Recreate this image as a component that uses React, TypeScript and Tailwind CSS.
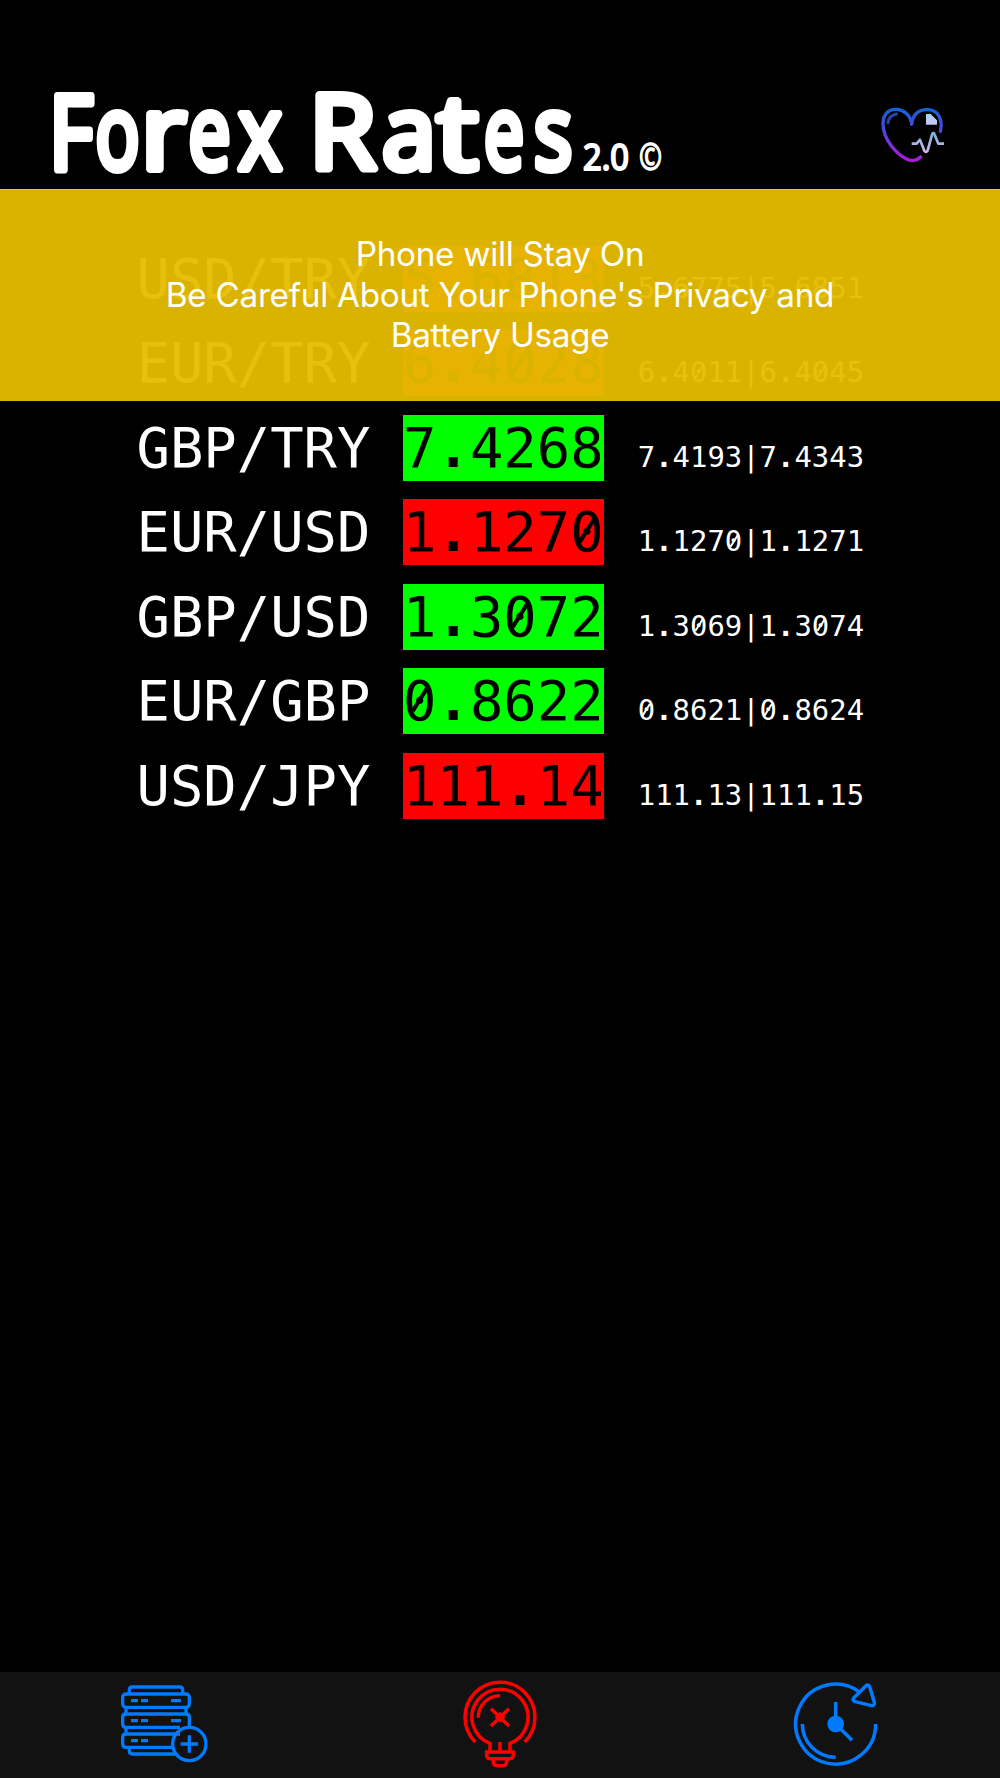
type Rate = {
  pair: string;
  price: string;
  bid: string;
  ask: string;
  up: boolean;
};

const rates: Rate[] = [
  { pair: "USD/TRY", price: "5.6813", bid: "5.6775", ask: "5.6851", up: false },
  { pair: "EUR/TRY", price: "6.4028", bid: "6.4011", ask: "6.4045", up: false },
  { pair: "GBP/TRY", price: "7.4268", bid: "7.4193", ask: "7.4343", up: true },
  { pair: "EUR/USD", price: "1.1270", bid: "1.1270", ask: "1.1271", up: false },
  { pair: "GBP/USD", price: "1.3072", bid: "1.3069", ask: "1.3074", up: true },
  { pair: "EUR/GBP", price: "0.8622", bid: "0.8621", ask: "0.8624", up: true },
  { pair: "USD/JPY", price: "111.14", bid: "111.13", ask: "111.15", up: false },
];

// zeros get a slash through them, dots are heavier than the digits
function Digits({ value }: { value: string }) {
  return (
    <>
      {value.split("").map((c, i) => {
        if (c === "0") {
          return (
            <span
              key={i}
              className="relative after:absolute after:left-1/2 after:top-[47.4%] after:h-[0.5em] after:w-[0.065em] after:-translate-x-1/2 after:-translate-y-1/2 after:rotate-[32deg] after:bg-current"
            >
              0
            </span>
          );
        }
        if (c === ".") {
          return (
            <span key={i} className="font-bold">
              .
            </span>
          );
        }
        return c;
      })}
    </>
  );
}

function RateRow({ rate }: { rate: Rate }) {
  return (
    <div className="flex h-[66px] items-baseline justify-center whitespace-pre font-['DejaVu_Sans_Mono',monospace] text-[55.5px] leading-[66px]">
      <span className="mr-[32.6px]">{rate.pair}</span>
      <span
        className={
          rate.up
            ? "mr-[33.4px] bg-[#00ff00] pr-[0.8px] text-black"
            : "mr-[33.4px] bg-[#ff0000] pr-[0.8px] text-black"
        }
      >
        <Digits value={rate.price} />
      </span>
      <span className="text-[28.9px] leading-none">
        <Digits value={rate.bid + "|" + rate.ask} />
      </span>
    </div>
  );
}

const letters = [
  { c: "F", x: 49, w: 44 },
  { c: "o", x: 95.5, w: 44 },
  { c: "r", x: 141, w: 45 },
  { c: "e", x: 188.5, w: 42 },
  { c: "x", x: 238.4, w: 43 },
  { c: " ", x: 282, w: 24 },
  { c: "R", x: 309, w: 67 },
  { c: "a", x: 382, w: 54 },
  { c: "t", x: 437, w: 41 },
  { c: "e", x: 484, w: 40 },
  { c: "s", x: 534, w: 38.2 },
];

function Wordmark() {
  return (
    <svg
      width="640"
      height="118"
      viewBox="40 70 640 118"
      className="overflow-visible"
      fill="#fff"
      stroke="#fff"
      strokeLinejoin="round"
      fontFamily="'Open Sans', sans-serif"
    >
      <text y="169" fontSize="102" strokeWidth="8" xmlSpace="preserve">
        {letters.map((l, i) => (
          <tspan key={i} x={l.x} textLength={l.w} lengthAdjust="spacingAndGlyphs">
            {l.c}
          </tspan>
        ))}
      </text>
      <text y="170" fontSize="36" strokeWidth="2.2" xmlSpace="preserve">
        <tspan x="583" textLength="46" lengthAdjust="spacingAndGlyphs">
          2.0
        </tspan>
        <tspan x="639" textLength="23" lengthAdjust="spacingAndGlyphs" strokeWidth="1.4">
          ©
        </tspan>
      </text>
    </svg>
  );
}

function HeartIcon() {
  return (
    <svg width="100" height="90" viewBox="0 0 300 270" fill="none">
      <defs>
        <linearGradient id="heart" x1="0" y1="55" x2="0" y2="215" gradientUnits="userSpaceOnUse">
          <stop offset="0" stopColor="#1463d8" />
          <stop offset="0.45" stopColor="#5044d8" />
          <stop offset="1" stopColor="#b018d8" />
        </linearGradient>
        <linearGradient id="pulse" x1="0" y1="70" x2="0" y2="190" gradientUnits="userSpaceOnUse">
          <stop offset="0" stopColor="#a8d4f4" />
          <stop offset="0.3" stopColor="#c8c4f0" />
          <stop offset="0.5" stopColor="#78b4dc" />
          <stop offset="1" stopColor="#d4b4ec" />
        </linearGradient>
      </defs>
      <g stroke="url(#heart)" strokeWidth="10" strokeLinecap="round" strokeLinejoin="round">
        <path d="M155 102C150 50 72 38 69 99C68 150 112 194 141 208C154 214 171 212 182 201" />
        <path d="M155 102C160 66 182 58 205 59C237 61 249 92 241 124" />
        <path d="M84 98C86 84 94 75 109 72" strokeWidth="9" opacity="0.8" />
      </g>
      <path d="M198 72H212L231 91V104H198Z" fill="url(#pulse)" />
      <path
        d="M155 161H170L180 149L193 182C197 188 202 186 204 178L216 134C218 127 222 127 224 134L235 161H252"
        stroke="url(#pulse)"
        strokeWidth="8"
        strokeLinejoin="round"
      />
    </svg>
  );
}

function ServerIcon() {
  return (
    <svg width="120" height="106" viewBox="0 6 360 318" fill="none" stroke="#007aff" strokeWidth="10">
      <path d="M88 72V60Q88 51 97 51H239Q248 51 248 60V72" />
      <rect x="68" y="72" width="200" height="40" rx="10" />
      <path d="M78 112V132M258 112V132M78 172V192" />
      <path d="M268 172V142Q268 132 258 132H78Q68 132 68 142V162Q68 172 78 172H240" />
      <path d="M240 192H78Q68 192 68 202V222Q68 232 78 232H218" />
      <path d="M88 232V243Q88 252 97 252H226" />
      <path d="M93 92H114M123 92H144M213 92H243M93 152H114M123 152H144M213 152H243M93 212H114M123 212H144" />
      <circle cx="268" cy="222" r="50" />
      <path d="M268 196V248M242 222H294" />
    </svg>
  );
}

function BulbIcon() {
  return (
    <svg width="120" height="106" viewBox="0 6 360 318" fill="none" stroke="#ff0000" strokeWidth="10.5">
      <path d="M106 216A105 105 0 1 1 254 216" />
      <path d="M150 243V220A84 84 0 1 1 210 220V243" />
      <path d="M115 143A65 65 0 0 1 180 77" />
      <path d="M153 116L207 168M207 116L153 168" />
      <path d="M171 142L180 133L189 142L180 151Z" fill="#ff0000" />
      <path d="M180 216V243" />
      <path d="M140 246H220V255Q220 266 209 266H151Q140 266 140 255Z" />
      <path d="M160 266V276Q160 287 171 287H189Q200 287 200 276V266" />
    </svg>
  );
}

function ClockIcon() {
  return (
    <svg width="120" height="106" viewBox="0 6 360 318" fill="none" stroke="#007aff" strokeWidth="10.5">
      <path d="M240 67A120 120 0 1 0 287 162" />
      <path d="M67 162A100 100 0 0 0 167 262" />
      <path
        d="M221 84L258 47Q265 42 269 50L283 97Q285 107 275 107L225 95Q216 91 221 84Z"
        strokeLinejoin="round"
      />
      <circle cx="167" cy="162" r="25" fill="#007aff" stroke="none" />
      <path d="M167 96V162L216 211" />
    </svg>
  );
}

export default function App() {
  return (
    <div className="flex h-[1778px] w-[1000px] flex-col overflow-hidden bg-black text-white">
      <header className="flex h-[188.5px] shrink-0 items-start justify-between pl-10 pr-10">
        <div className="pt-[70px]">
          <Wordmark />
        </div>
        <div className="pt-[90px]">
          <HeartIcon />
        </div>
      </header>

      <main className="relative flex-1">
        <div className="flex flex-col gap-[18.5px] pt-[57.4px] pl-[0.6px]">
          {rates.map((rate) => (
            <RateRow key={rate.pair} rate={rate} />
          ))}
        </div>
        <div className="absolute inset-x-0 top-0 flex h-[212.5px] items-center justify-center border-t border-[#e6c42a] bg-[#e5bd00]/95 pb-px text-center font-['Inter',sans-serif] text-[33.3px] leading-[40.4px] tracking-[-0.3px]">
          <p>
            Phone will Stay On
            <br />
            Be Careful About Your Phone's Privacy and
            <br />
            Battery Usage
          </p>
        </div>
      </main>

      <nav className="flex h-[106px] shrink-0 justify-between bg-[#121212] px-[100px]">
        <button>
          <ServerIcon />
        </button>
        <button>
          <BulbIcon />
        </button>
        <button>
          <ClockIcon />
        </button>
      </nav>
    </div>
  );
}
